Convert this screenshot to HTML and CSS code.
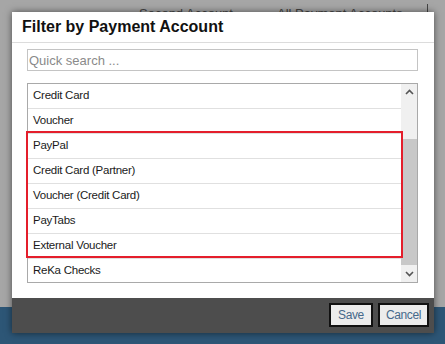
FILE: index.html
```html
<!DOCTYPE html>
<html lang="en" dir="ltr">
<head>
	<title>Filter by Payment Account</title>
	<meta charset="utf-8">
	<meta name="viewport" content="width=device-width,initial-scale=1">
	<link rel="stylesheet" href="styles.css">
</head>
<body>
	<div class="page">
		<div class="backdrop-bar">
			<span class="bar-second">Second Account</span>
			<span class="bar-all">All Payment Accounts</span>
			<i class="bar-tick"></i>
		</div>
		<div class="backdrop-fill"></div>
		<div class="backdrop-band"></div>

		<div class="dialog">
			<h2 class="dialog-title">Filter by Payment Account</h2>
			<div class="dialog-body">
				<input class="search" type="text" placeholder="Quick search ...">
				<div class="list">
					<div class="list-items">
						<div class="item">Credit Card</div>
						<div class="item">Voucher</div>
						<div class="item">PayPal</div>
						<div class="item">Credit Card (Partner)</div>
						<div class="item">Voucher (Credit Card)</div>
						<div class="item">PayTabs</div>
						<div class="item">External Voucher</div>
						<div class="item">ReKa Checks</div>
					</div>
					<div class="scrollbar">
						<div class="scroll-btn">
							<svg width="9" height="6" viewBox="0 0 9 6"><path d="M1 5 L4.5 1.5 L8 5" fill="none" stroke="#555" stroke-width="1.6"/></svg>
						</div>
						<div class="scroll-track"><div class="scroll-thumb"></div></div>
						<div class="scroll-btn">
							<svg width="9" height="6" viewBox="0 0 9 6"><path d="M1 1 L4.5 4.5 L8 1" fill="none" stroke="#555" stroke-width="1.6"/></svg>
						</div>
					</div>
					<div class="highlight"></div>
				</div>
			</div>
			<div class="dialog-footer">
				<button class="btn btn-save">Save</button>
				<button class="btn btn-cancel">Cancel</button>
			</div>
		</div>
	</div>
</body>
</html>
```

FILE: styles.css
```css
body {
	margin: 0;
	font: 12px "Liberation Sans", Arial, sans-serif;
	background: #a6a6a6;
}

.page {
	display: flex;
	flex-direction: column;
	height: 344px;
	overflow: hidden;
	position: relative;
}

.backdrop-bar {
	display: flex;
	align-items: flex-start;
	height: 16px;
	padding: 6px 17px 0 0;
	font-size: 13px;
	line-height: 16px;
	color: #444;
}

.bar-second {
	margin-left: 139px;
}

.bar-all {
	margin-left: 44px;
}

.bar-tick {
	width: 1px;
	height: 10px;
	margin: -2px 0 0 auto;
	background: #444;
}

.backdrop-fill {
	flex: 1;
	background: #a6a6a6;
}

.backdrop-band {
	height: 37px;
	background: #2d5676;
}

.dialog {
	position: absolute;
	left: 12px;
	top: 12px;
	width: 422px;
	height: 321px;
	display: flex;
	flex-direction: column;
	background: #fff;
	box-shadow: 0 0 7px rgba(0, 0, 0, 0.55);
}

.dialog-title {
	margin: 0;
	height: 30px;
	padding-left: 10px;
	border-bottom: 1px solid #dcdcdc;
	font-size: 16px;
	font-weight: bold;
	line-height: 29px;
	color: #111;
}

.dialog-body {
	flex: 1;
	padding: 6px 16px 0 15px;
}

.search {
	display: block;
	box-sizing: border-box;
	width: 100%;
	height: 22px;
	margin: 0;
	padding: 0 1px;
	border: 1px solid #c4c4c4;
	border-radius: 0;
	outline: none;
	font: 13px "Liberation Sans", Arial, sans-serif;
	color: #333;
}

.search::placeholder {
	color: #8a8a8a;
}

.list {
	position: relative;
	display: flex;
	height: 198px;
	margin-top: 12px;
	border: 1px solid #a9a9a9;
}

.list-items {
	flex: 1;
	overflow: hidden;
}

.item {
	height: 24px;
	padding-left: 5px;
	border-bottom: 1px solid #e0e0e0;
	font-size: 11.5px;
	letter-spacing: -0.25px;
	line-height: 23px;
	color: #1a1a1a;
}

.scrollbar {
	display: flex;
	flex-direction: column;
	width: 16px;
	background: #f0f0f0;
}

.scroll-btn {
	display: flex;
	align-items: center;
	justify-content: center;
	height: 16px;
}

.scroll-track {
	flex: 1;
	padding: 39px 0 1px;
}

.scroll-thumb {
	height: 126px;
	background: #c8c8c8;
}

.highlight {
	position: absolute;
	left: -2px;
	top: 47px;
	width: 373px;
	height: 123px;
	border: 2px solid #e41e2b;
}

.dialog-footer {
	display: flex;
	justify-content: flex-end;
	align-items: flex-start;
	gap: 5px;
	height: 35px;
	box-sizing: border-box;
	padding: 5px 5px 0 0;
	background: #4d4d4d;
}

.btn {
	height: 24px;
	padding: 0;
	border: 2px solid #111;
	background: #ececec;
	font: 12px "Liberation Sans", Arial, sans-serif;
	letter-spacing: -0.4px;
	color: #46698b;
}

.btn-save {
	width: 44px;
}

.btn-cancel {
	width: 51px;
}
```
